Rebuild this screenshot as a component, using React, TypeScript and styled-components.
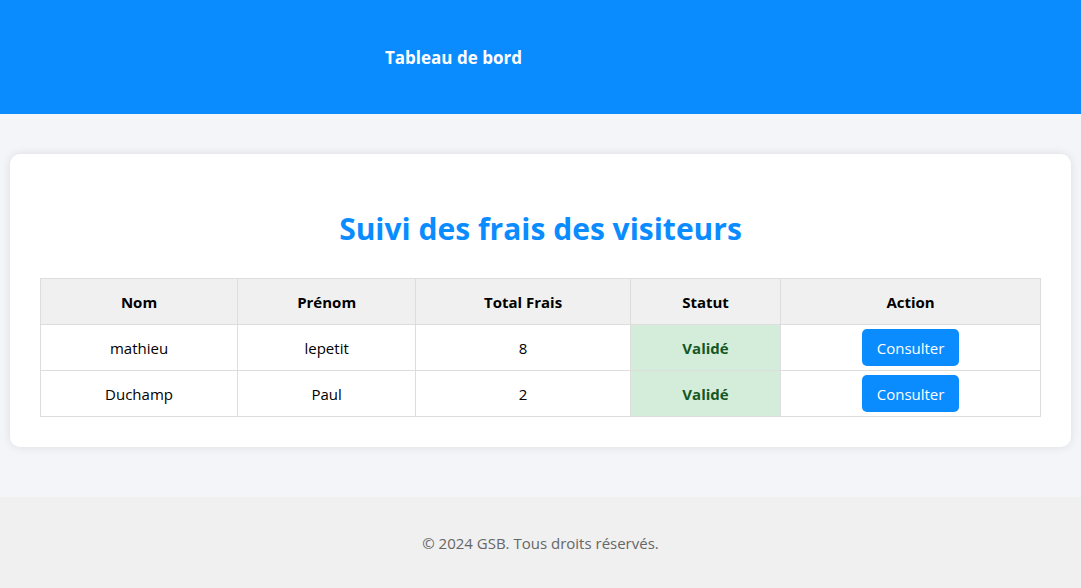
import styled, { createGlobalStyle } from "styled-components"

const GlobalStyle = createGlobalStyle`
  body {
    margin: 0;
    font-family: "Open Sans", "Noto Sans", sans-serif;
    background-color: #f4f5f9;
    color: #000;
  }
`

const Page = styled.div`
  display: flex;
  flex-direction: column;
  min-height: 588px;
`

const TopBar = styled.header`
  height: 114px;
  background-color: #0a8cff;
  display: flex;
  align-items: center;
  padding-left: 385px;
  box-sizing: border-box;
`

const TopTitle = styled.h1`
  margin: 0;
  color: #fff;
  font-size: 17px;
  font-weight: 700;
`

const Main = styled.main`
  padding: 40px 10px 50px;
`

const Card = styled.section`
  background-color: #fff;
  border-radius: 10px;
  box-shadow: 0 0 10px rgba(0, 0, 0, 0.1);
  padding: 30px;
`

const Title = styled.h2`
  margin: 25px 0 29px;
  text-align: center;
  color: #0a8cff;
  font-size: 30px;
  font-weight: 700;
  line-height: 40px;
`

const Table = styled.table`
  width: 100%;
  border-collapse: collapse;
  font-size: 15px;
`

const Th = styled.th<{ $w: number }>`
  width: ${p => p.$w}px;
  height: 45px;
  padding: 0;
  background-color: #f0f0f0;
  border: 1px solid #ddd;
  font-weight: 700;
  text-align: center;
`

const Td = styled.td`
  height: 45px;
  padding: 0;
  border: 1px solid #ddd;
  text-align: center;
`

const StatusTd = styled(Td)`
  background-color: #d4edda;
  color: #155724;
  font-weight: 700;
`

const Button = styled.button`
  background-color: #0a8cff;
  color: #fff;
  border: none;
  border-radius: 5px;
  height: 37px;
  padding: 0 15px;
  font-family: inherit;
  font-size: 15px;
  cursor: pointer;
`

const Footer = styled.footer`
  background-color: #f0f0f0;
  height: 91px;
  display: flex;
  align-items: center;
  justify-content: center;
  color: #666;
  font-size: 15px;
  margin-top: auto;
`

const visiteurs = [
  { nom: "mathieu", prenom: "lepetit", total: 8, statut: "Validé" },
  { nom: "Duchamp", prenom: "Paul", total: 2, statut: "Validé" },
]

const App = () => {
  return (
    <Page>
      <GlobalStyle />
      <TopBar>
        <TopTitle>Tableau de bord</TopTitle>
      </TopBar>
      <Main>
        <Card>
          <Title>Suivi des frais des visiteurs</Title>
          <Table>
            <thead>
              <tr>
                <Th $w={197}>Nom</Th>
                <Th $w={178}>Prénom</Th>
                <Th $w={215}>Total Frais</Th>
                <Th $w={150}>Statut</Th>
                <Th $w={260}>Action</Th>
              </tr>
            </thead>
            <tbody>
              {visiteurs.map(v => (
                <tr key={v.nom}>
                  <Td>{v.nom}</Td>
                  <Td>{v.prenom}</Td>
                  <Td>{v.total}</Td>
                  <StatusTd>{v.statut}</StatusTd>
                  <Td>
                    <Button>Consulter</Button>
                  </Td>
                </tr>
              ))}
            </tbody>
          </Table>
        </Card>
      </Main>
      <Footer>© 2024 GSB. Tous droits réservés.</Footer>
    </Page>
  )
}

export default App
